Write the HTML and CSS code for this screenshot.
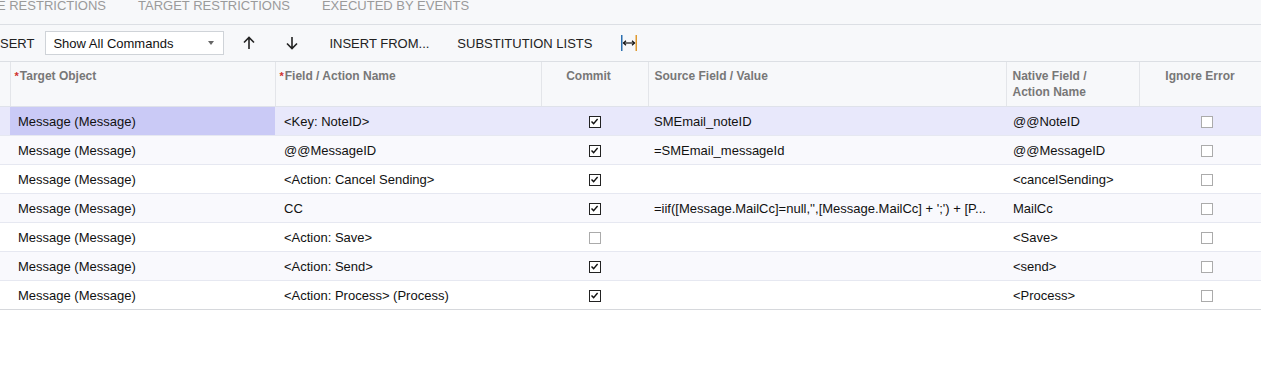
FILE: index.html
```html
<!DOCTYPE html>
<html lang="en">
<head>
  <meta charset="UTF-8">
  <title>Mapping Steps</title>
  <link rel="stylesheet" href="styles.css">
</head>
<body>

  <!-- Tabs -->
  <div class="tabs">
    <span class="tab first">SOURCE RESTRICTIONS</span>
    <span class="tab">TARGET RESTRICTIONS</span>
    <span class="tab">EXECUTED BY EVENTS</span>
  </div>

  <!-- Toolbar -->
  <div class="toolbar">
    <span class="tool first">INSERT</span>
    <div class="select">
      <span>Show All Commands</span>
      <span class="caret"></span>
    </div>
    <span class="tool arrow up">
      <svg width="12" height="14" viewBox="0 0 12 14"><path d="M6 13V1.5M1 6.5L6 1.5L11 6.5" fill="none" stroke="#222" stroke-width="1.6"/></svg>
    </span>
    <span class="tool arrow">
      <svg width="12" height="14" viewBox="0 0 12 14"><path d="M6 1v11.5M1 7.5L6 12.5L11 7.5" fill="none" stroke="#222" stroke-width="1.6"/></svg>
    </span>
    <span class="tool text insert">INSERT FROM...</span>
    <span class="tool text">SUBSTITUTION LISTS</span>
    <span class="tool fit">
      <svg width="18" height="16" viewBox="0 0 18 16">
        <rect x="1" y="0" width="1.5" height="16" fill="#2a6fb0"/>
        <rect x="15.5" y="0" width="1.5" height="16" fill="#e0992f"/>
        <path d="M3.5 8H14.5" stroke="#111" stroke-width="1.2"/>
        <path d="M6 5.8L3.5 8L6 10.2M12 5.8L14.5 8L12 10.2" fill="none" stroke="#111" stroke-width="1.2"/>
      </svg>
    </span>
  </div>

  <!-- Grid -->
  <table class="grid">
    <colgroup>
      <col style="width:10px"><col style="width:265px"><col style="width:266px"><col style="width:107px">
      <col style="width:358px"><col style="width:133px"><col style="width:136px">
    </colgroup>
    <thead>
      <tr>
        <th></th>
        <th><span class="req">*</span>Target Object</th>
        <th><span class="req">*</span>Field / Action Name</th>
        <th class="center commit">Commit</th>
        <th>Source Field / Value</th>
        <th>Native Field /<br>Action Name</th>
        <th class="center last">Ignore Error</th>
      </tr>
    </thead>
    <tbody id="rows"></tbody>
  </table>

  <script>
    const rows = [
      ['<Key: NoteID>', true, 'SMEmail_noteID', '@@NoteID'],
      ['@@MessageID', true, '=SMEmail_messageId', '@@MessageID'],
      ['<Action: Cancel Sending>', true, '', '<cancelSending>'],
      ['CC', true, "=iif([Message.MailCc]=null,'',[Message.MailCc] + ';') + [P...", 'MailCc'],
      ['<Action: Save>', false, '', '<Save>'],
      ['<Action: Send>', true, '', '<send>'],
      ['<Action: Process> (Process)', true, '', '<Process>']
    ];

    const body = document.getElementById('rows');

    function cell(text, cls) {
      const td = document.createElement('td');
      if (cls) td.className = cls;
      td.textContent = text;
      return td;
    }

    function check(on) {
      const td = document.createElement('td');
      td.className = 'center';
      const box = document.createElement('span');
      box.className = on ? 'box on' : 'box';
      if (on) {
        box.innerHTML = '<svg width="9" height="9" viewBox="0 0 9 9"><path d="M1.5 4.5L3.6 6.6L7.6 2" fill="none" stroke="#111" stroke-width="1.4"/></svg>';
      }
      td.appendChild(box);
      return td;
    }

    rows.forEach((r, i) => {
      const tr = document.createElement('tr');
      if (i === 0) tr.className = 'selected';
      tr.appendChild(cell(''));
      tr.appendChild(cell('Message (Message)', i === 0 ? 'active' : ''));
      tr.appendChild(cell(r[0]));
      tr.appendChild(check(r[1]));
      tr.appendChild(cell(r[2]));
      tr.appendChild(cell(r[3]));
      tr.appendChild(check(false));
      body.appendChild(tr);
    });
  </script>
</body>
</html>
```

FILE: styles.css
```css
body {
  margin: 0;
  font-family: 'Liberation Sans', Arial, sans-serif;
  font-size: 13px;
  color: #222;
  background: #fff;
  overflow: hidden;
}

.tabs {
  height: 24px;
  background: #f7f8fa;
  border-bottom: 1px solid #dcdfe4;
  display: flex;
  gap: 32px;
  white-space: nowrap;
  overflow: hidden;
}

.tab {
  color: #9a9a9a;
  line-height: 14px;
  margin-top: -1px;
}

.tab.first {
  margin-left: -50px;
}

.toolbar {
  height: 36px;
  background: #f7f8fa;
  border-bottom: 1px solid #dcdfe4;
  display: flex;
  align-items: center;
  white-space: nowrap;
}

.tool {
  color: #222;
  display: flex;
  align-items: center;
  justify-content: center;
  height: 100%;
}

.tool.first {
  margin-left: -13px;
  margin-right: 11px;
}

.select {
  border: 1px solid #cfd3d8;
  background: #fff;
  display: flex;
  align-items: center;
  justify-content: space-between;
  padding: 0 9px 0 7px;
  box-sizing: border-box;
  width: 179px;
  height: 24px;
  color: #111;
}

.caret {
  width: 0;
  height: 0;
  border-left: 3.5px solid transparent;
  border-right: 3.5px solid transparent;
  border-top: 4px solid #666;
}

.tool.arrow {
  width: 43px;
}

.tool.arrow.up {
  margin-left: 3px;
}

.tool.text {
  padding: 0 14px;
}

.tool.text.insert {
  padding-left: 16px;
}

.tool.fit {
  padding-left: 14px;
}

.grid {
  border-collapse: collapse;
  table-layout: fixed;
  width: 1275px;
}

.grid th {
  background: #f7f8fa;
  color: #777;
  font-size: 12px;
  font-weight: bold;
  text-align: left;
  vertical-align: top;
  height: 44px;
  padding: 6px 6px 0 6px;
  line-height: 16px;
  box-sizing: border-box;
  border-right: 1px solid #e3e5e9;
  border-bottom: 1px solid #dfe2ea;
}

.grid th:first-child {
  padding: 0;
}

.grid th:nth-child(2),
.grid th:nth-child(3) {
  padding-left: 4px;
}

.grid th.center {
  text-align: center;
}

.grid th.commit {
  padding-right: 18px;
}

.grid th.last {
  padding-right: 20px;
}

.req {
  color: #d0312d;
  font-size: 11px;
  margin-right: 1px;
}

.grid td {
  height: 28px;
  padding: 1px 8px 0 8px;
  box-sizing: border-box;
  border-bottom: 1px solid #e6e8f1;
  white-space: nowrap;
  overflow: hidden;
  color: #111;
}

.grid td:first-child {
  padding: 0;
}

.grid td:nth-child(3) {
  padding-left: 9px;
}

.grid td:nth-child(5) {
  padding-left: 6px;
}

.grid td:nth-child(6) {
  padding-left: 7px;
}

.grid tbody tr {
  height: 29px;
}

.grid tbody tr:nth-child(even) td {
  background: #f9f9fd;
}

.grid tbody tr:last-child td {
  border-bottom: 1px solid #d6d8dc;
}

.grid tbody tr.selected td {
  background: #e8e8fb;
}

.grid tbody tr.selected td.active {
  background: #cacaf6;
}

.grid td.center {
  text-align: center;
  padding: 0;
}

.box {
  display: inline-block;
  width: 12px;
  height: 12px;
  box-sizing: border-box;
  border: 1px solid #ababab;
  background: #fff;
  vertical-align: middle;
}

.box.on {
  border-color: #222;
}

.box svg {
  display: block;
  margin: 0.5px 0 0 0.5px;
}
```
